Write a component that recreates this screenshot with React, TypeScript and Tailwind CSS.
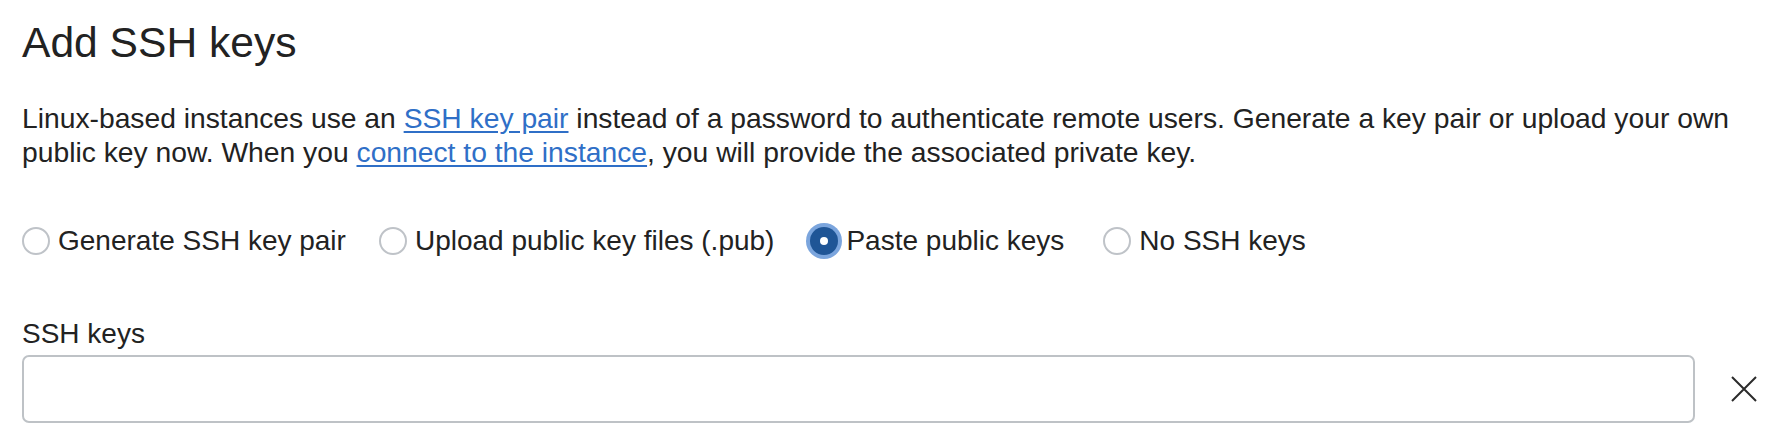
import React from "react";

function Radio({ label, checked }: { label: string; checked?: boolean }) {
  return (
    <label className="flex items-center h-[36px]">
      {checked ? (
        <span className="flex items-center justify-center w-[28px] h-[28px] rounded-full bg-[#1f5596] shadow-[0_0_0_4px_#7ba5dd]">
          <span className="w-[8px] h-[8px] rounded-full bg-white" />
        </span>
      ) : (
        <span className="w-[28px] h-[28px] rounded-full border-2 border-[#bfc3c8] bg-white" />
      )}
      <span className="ml-[8px] text-[28px] leading-[36px] text-[#222222]">{label}</span>
    </label>
  );
}

export default function App() {
  return (
    <div
      className="w-[1776px] h-[442px] bg-white pl-[22px] pr-[19px] pt-[18px] text-[#222222]"
      style={{ fontFamily: '"Liberation Sans", Arial, Helvetica, sans-serif' }}
    >
      <h1 className="text-[42.6px] leading-[48px] font-normal">Add SSH keys</h1>
      <p className="mt-[35px] text-[28.25px] leading-[34px]">
        Linux-based instances use an{" "}
        <a className="text-[#2f6fc7] underline underline-offset-[3px]" href="#">
          SSH key pair
        </a>{" "}
        instead of a password to authenticate remote users. Generate a key pair or upload your own public key
        now. When you{" "}
        <a className="text-[#2f6fc7] underline underline-offset-[3px]" href="#">
          connect to the instance
        </a>
        , you will provide the associated private key.
      </p>
      <div className="mt-[54px] flex items-center">
        <Radio label="Generate SSH key pair" />
        <div className="w-[33px]" />
        <Radio label="Upload public key files (.pub)" />
        <div className="w-[36px]" />
        <Radio label="Paste public keys" checked />
        <div className="w-[39px]" />
        <Radio label="No SSH keys" />
      </div>
      <div className="mt-[59px] text-[28px] leading-[32px]">SSH keys</div>
      <div className="mt-[5px] flex items-center">
        <div className="flex-1 h-[68px] rounded-[7px] border-2 border-[#bec2c6] bg-white" />
        <button className="ml-[36px] w-[26px] h-[26px] flex items-center justify-center text-[#2b2b2b]">
          <svg width="26" height="26" viewBox="0 0 26 26" fill="none" stroke="currentColor" strokeWidth="2">
            <path d="M1 1 L25 25 M25 1 L1 25" />
          </svg>
        </button>
      </div>
    </div>
  );
}
